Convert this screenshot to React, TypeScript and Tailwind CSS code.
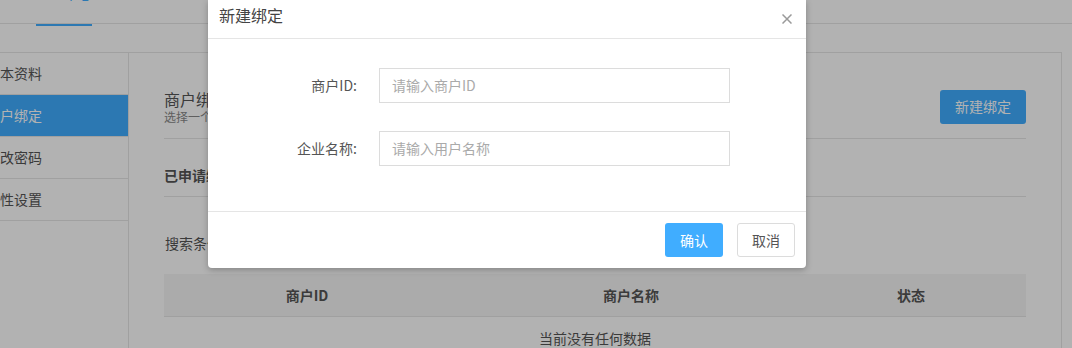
import React from 'react';

const sideItems = ['基本资料', '商户绑定', '修改密码', '个性设置'];

function CloseIcon() {
  return (
    <svg width="10" height="10" viewBox="0 0 10 10" className="block">
      <path d="M0.5 0.5 L9.5 9.5 M9.5 0.5 L0.5 9.5" stroke="#9a9a9a" strokeWidth="1.5" fill="none" />
    </svg>
  );
}

function BindDialog() {
  return (
    <div className="absolute left-[208px] top-0 w-[598px] bg-white rounded-b-[4px] shadow-[0_2px_6px_rgba(0,0,0,0.25)]">
      <div className="h-[39px] border-b border-[#e5e5e5] flex items-start justify-between pl-[11px] pr-[14px]">
        <div className="pt-[5px] text-[16px] leading-[20px] text-[#444]">新建绑定</div>
        <div className="pt-[14px]"><CloseIcon /></div>
      </div>
      <div className="pt-[29px] pb-[45px] flex flex-col gap-[28px]">
        <div className="flex items-center">
          <div className="w-[149px] text-right text-[14px] text-[#555]">商户ID:</div>
          <div className="ml-[22px] w-[351px] h-[35px] border border-[#dcdcdc] flex items-center pl-[12px] text-[14px] text-[#aaa]">请输入商户ID</div>
        </div>
        <div className="flex items-center">
          <div className="w-[149px] text-right text-[14px] text-[#555]">企业名称:</div>
          <div className="ml-[22px] w-[351px] h-[35px] border border-[#dcdcdc] flex items-center pl-[12px] text-[14px] text-[#aaa]">请输入用户名称</div>
        </div>
      </div>
      <div className="border-t border-[#e5e5e5] h-[57px] flex items-center justify-end gap-[14px] pr-[11px]">
        <button className="w-[58px] h-[34px] rounded-[3px] bg-[#40adff] text-white text-[14px]">确认</button>
        <button className="w-[58px] h-[34px] rounded-[3px] border border-[#dcdcdc] bg-white text-[#555] text-[14px]">取消</button>
      </div>
    </div>
  );
}

export default function App() {
  return (
    <div className="relative w-[1072px] h-[348px] overflow-hidden bg-white font-['Noto_Sans_CJK_SC','Noto_Sans',sans-serif]">
      <div className="h-[24px] border-b border-[#e6e6e6] overflow-hidden">
        <div className="ml-[36px] -mt-[17px] w-[56px] text-[14px] leading-[20px] text-[#40adff]">个人中心</div>
      </div>
      <div className="ml-[36px] w-[56px] h-[2px] bg-[#40adff]" />

      <div className="flex -ml-[30px] mt-[26px]">
        <div className="w-[158px] shrink-0 border-t border-[#e6e6e6]">
          {sideItems.map((item, i) => (
            <div
              key={item}
              className={`h-[42px] border-b border-[#e6e6e6] pl-[16px] flex items-center text-[14px] ${i === 1 ? 'bg-[#40adff] text-white' : 'text-[#555]'}`}
            >
              {item}
            </div>
          ))}
        </div>
        <div className="w-[934px] shrink-0 border border-[#e6e6e6] px-[35px] h-[330px]">
          <div className="pt-[36px] pb-[14px] border-b border-[#e6e6e6] flex items-center justify-between">
            <div>
              <div className="text-[16px] leading-[20px] text-[#555]">商户绑定</div>
              <div className="text-[12px] leading-[15px] text-[#888]">选择一个商户进行绑定</div>
            </div>
            <button className="w-[86px] h-[34px] rounded-[3px] bg-[#40adff] text-white text-[14px]">新建绑定</button>
          </div>
          <div className="pt-[26px] pb-[11px] border-b border-[#e6e6e6] text-[14px] leading-[20px] font-bold text-[#555]">已申请绑定的商户</div>
          <div className="pt-[36px] text-[14px] leading-[20px] text-[#555] pl-[1px]">搜索条件：</div>
          <div className="mt-[21px]">
            <div className="flex h-[43px] bg-[#f5f5f5] border-b border-[#e6e6e6] items-center text-[14px] font-bold text-[#555]">
              <div className="w-[286px] text-center">商户ID</div>
              <div className="w-[362px] text-center">商户名称</div>
              <div className="flex-1 text-center pr-[16px]">状态</div>
            </div>
            <div className="pt-[11px] text-center text-[14px] leading-[20px] text-[#555]">当前没有任何数据</div>
          </div>
        </div>
      </div>

      <div className="absolute inset-0 bg-black/30" />
      <BindDialog />
    </div>
  );
}
